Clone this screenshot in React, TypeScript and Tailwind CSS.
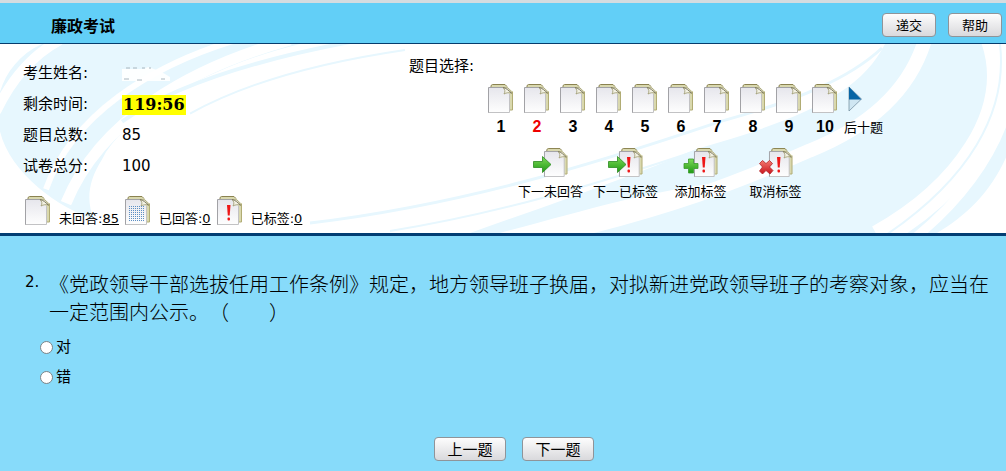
import type { ReactNode } from "react";

const QUESTIONS = [1, 2, 3, 4, 5, 6, 7, 8, 9, 10];
const CURRENT = 2;

const INFO = [
  { label: "考生姓名:", value: "" },
  { label: "剩余时间:", value: "119:56" },
  { label: "题目总数:", value: "85" },
  { label: "试卷总分:", value: "100" },
];

type ActionKind = "next" | "nextMarked" | "add" | "remove";

function Gradients() {
  return (
    <svg aria-hidden className="absolute h-0 w-0">
      <defs>
        <linearGradient id="sheet" x1="0" y1="0" x2="0" y2="1">
          <stop offset="0" stopColor="#e6e6ec" />
          <stop offset="1" stopColor="#fefefe" />
        </linearGradient>
        <linearGradient id="green" x1="0" y1="0" x2="0" y2="1">
          <stop offset="0" stopColor="#7ed957" />
          <stop offset="1" stopColor="#1f9a14" />
        </linearGradient>
        <linearGradient id="red" x1="0" y1="0" x2="0" y2="1">
          <stop offset="0" stopColor="#f47a70" />
          <stop offset="1" stopColor="#c8141c" />
        </linearGradient>
        <pattern id="dots" width="2" height="2" patternUnits="userSpaceOnUse">
          <rect width="1" height="1" fill="#5b8fc4" />
        </pattern>
      </defs>
    </svg>
  );
}

/* Two stacked sheets with a folded corner. */
function Sheets() {
  return (
    <g>
      <path d="M3 4V1.500L4.500.5H17l3 3 4.500 4V26H20V10z" fill="#d9d8ae" />
      <path d="M3 3V1.500L4.500.5H17l2 2" fill="none" stroke="#8a8250" />
      <path d="M24.500 7.500V26H22" fill="none" stroke="#b1ac74" />
      <path d="M.5 3.500H15l6.500 6.500v18.500H.5z" fill="url(#sheet)" />
      <path d="M.5 29V3.500H15" fill="none" stroke="#a2a2a6" />
      <path d="M.5 28.500h21V10" fill="none" stroke="#c2c2c4" />
      <path d="M15 3.500c2 2 2.500 4 1 6.500 2.500-1.500 5-1.500 8-1L20 4z" fill="#f3f2e4" stroke="#9b976c" strokeWidth="0.800" />
      <path d="M15 3.500c3 .5 6 3 8.500 6" fill="none" stroke="#77735a" strokeWidth="0.900" />
    </g>
  );
}

function Bang() {
  return (
    <g fill="#ee1616">
      <path d="M10 9h3.500l-.8 10.500h-1.900z" />
      <rect x="10.500" y="21.500" width="2.500" height="3" rx="1" />
    </g>
  );
}

function SheetIcon({ children }: { children?: ReactNode }) {
  return (
    <svg aria-hidden width="26" height="30" viewBox="0 0 26 30" className="shrink-0">
      <Sheets />
      {children}
    </svg>
  );
}

function ActionIcon({ kind }: { kind: ActionKind }) {
  return (
    <svg aria-hidden width="36" height="30" viewBox="0 0 36 30">
      <g transform="translate(11 0) scale(.94 1)">
        <Sheets />
      </g>
      {kind !== "next" && (
        <g transform="translate(9 0)">
          <Bang />
        </g>
      )}
      {(kind === "next" || kind === "nextMarked") && (
        <path d="M.5 13.500h9V8.500l8.500 8-8.500 8v-5h-9z" fill="url(#green)" stroke="#2b8a20" strokeWidth="0.800" />
      )}
      {kind === "add" && (
        <path d="M5.500 11h5v4.500H15v5h-4.500V25h-5v-4.500H1v-5h4.500z" fill="url(#green)" stroke="#3b9a2c" strokeWidth="0.800" />
      )}
      {kind === "remove" && (
        <path d="m4.500 12.500 3.500 3 3.500-3 3 3-3 3.500 3.500 3.500-3 3.500-4-3.500-3.500 3.500-3-3 3-4-3-3.500z" fill="url(#red)" stroke="#b3242a" strokeWidth="0.800" />
      )}
    </svg>
  );
}

function Swirls() {
  return (
    <svg aria-hidden viewBox="0 0 1006 190" preserveAspectRatio="none" className="absolute inset-0 h-full w-full">
      <g fill="#e7f7fe">
        <path d="M42 0H300C210 22 125 70 102 116 88 138 86 158 94 176 60 166 10 130 0 88V48C6 28 20 10 42 0Z" />
        <path d="M885 0H1006V114C990 150 965 173 937 190H540C620 176 680 160 720 139 640 150 590 166 500 190H470C560 158 640 130 695 106 800 76 860 50 885 0Z" />
      </g>
      <g fill="none" stroke="#fff">
        <path d="M60-4C34 10 12 34-4 68" strokeWidth="10" />
        <path d="M236-4C150 22 72 72 46 146" strokeWidth="6" />
        <path d="M290-4C190 24 100 76 66 160" strokeWidth="11" />
        <path d="M925-4C908 52 862 86 810 107 740 138 670 166 540 196" strokeWidth="14" />
        <path d="M993-4C1018 70 960 148 878 194" strokeWidth="24" />
        <path d="M1000 0C1010 24 1012 50 1004 76 990 116 960 158 916 194" strokeWidth="9" />
      </g>
      <g fill="none" stroke="#e7f7fe">
        <path d="M350-2C245 18 170 44 122 78" strokeWidth="4" />
        <path d="M405 6C310 20 240 42 190 70" strokeWidth="2" />
        <path d="M310 180C460 162 590 122 720 78 800 56 850 34 882 4" strokeWidth="3" />
        <path d="M390 188C500 170 600 140 700 106" strokeWidth="2" />
        <path d="M1000 0C1008 70 968 136 886 192" strokeWidth="2" />
      </g>
    </svg>
  );
}

/* The candidate's name is wiped out, only a few specks stay. */
function WipedName() {
  return (
    <svg aria-hidden width="50" height="18" viewBox="0 0 50 18">
      <path d="M0 4h22l4-2 12 4 10 6v4H0z" fill="#fff" opacity="0.900" />
      <path d="M4 3h4m3 0h4m5 0h3m4 0h2M2 14h5m8 1h5m19-1h4" stroke="#a9b6be" />
    </svg>
  );
}

function PushButton({ children, className }: { children: ReactNode; className: string }) {
  return (
    <button
      type="button"
      className={`h-6 rounded border border-[#8f9499] bg-linear-to-b from-[#fdfdfd] to-[#d9d9dc] text-center leading-6 ${className}`}
    >
      {children}
    </button>
  );
}

function Legend({ label, count, icon }: { label: string; count: number; icon?: ReactNode }) {
  return (
    <div className="flex items-end gap-2">
      <SheetIcon>{icon}</SheetIcon>
      <span className="text-[13px] leading-3.5">
        {label}:<a href="#" className="underline">{count}</a>
      </span>
    </div>
  );
}

function Action({ label, kind }: { label: string; kind: ActionKind }) {
  return (
    <button type="button" className="flex w-[75px] flex-col items-center gap-1 text-[13px] leading-5">
      <ActionIcon kind={kind} />
      {label}
    </button>
  );
}

export default function App() {
  return (
    <div className="min-h-screen bg-[#87dbfa] font-['DejaVu_Sans','Noto_Sans_CJK_SC',sans-serif] text-black">
      <Gradients />
      <header className="flex items-end justify-between border-t-3 border-b border-t-[#d5dce0] border-b-[#063c6c] bg-[#62cff7] pr-1 pl-[51px]">
        <h1 className="pt-3 pb-1 text-base leading-6 font-bold">廉政考试</h1>
        <div className="flex gap-3 pb-1.5 text-[13px]">
          <PushButton className="w-[54px]">递交</PushButton>
          <PushButton className="w-[54px]">帮助</PushButton>
        </div>
      </header>

      <section className="relative border-b-3 border-[#033e73] bg-white">
        <Swirls />
        <div className="relative flex">
          <div className="w-[409px] shrink-0 pt-3.5 pb-[7px] pl-[23px]">
            <dl className="text-[15px]">
              {INFO.map((row) => (
                <div key={row.label} className="flex h-[31px] items-center">
                  <dt className="w-[99px]">{row.label}</dt>
                  {row.value === "119:56" ? (
                    <dd className="bg-[#ffff00] px-px font-['DejaVu_Serif',serif] text-base leading-5 font-bold">
                      {row.value}
                    </dd>
                  ) : (
                    <dd>{row.value || <WipedName />}</dd>
                  )}
                </div>
              ))}
            </dl>
            <div className="mt-3.5 flex gap-1.5 pl-0.5">
              <Legend label="未回答" count={85} />
              <Legend label="已回答" count={0} icon={<rect x="4" y="9" width="15" height="16" fill="url(#dots)" />} />
              <Legend label="已标签" count={0} icon={<Bang />} />
            </div>
          </div>

          <div className="pt-2.5">
            <h2 className="text-[15px] leading-6">题目选择:</h2>
            <div className="mt-1.5 flex pl-[79px]">
              {QUESTIONS.map((n) => (
                <button
                  key={n}
                  type="button"
                  className={`flex w-9 flex-col items-start font-['Liberation_Sans',sans-serif] text-base leading-[26px] font-bold ${n === CURRENT ? "text-[#ee0000]" : ""}`}
                >
                  <SheetIcon />
                  <span className="w-[26px] text-center">{n}</span>
                </button>
              ))}
              <button type="button" className="-ml-1 flex flex-col items-start text-[13px] leading-7">
                <svg aria-hidden width="20" height="30" viewBox="0 0 20 30" className="ml-1">
                  <path d="M1 3v24l12.500-12z" fill="#cfe6f2" stroke="#6b8799" strokeWidth="0.700" />
                  <path d="M1 3v12.500h12.500z" fill="#0865a5" />
                </svg>
                后十题
              </button>
            </div>
            <div className="mt-1.5 flex pl-[104px]">
              <Action label="下一未回答" kind="next" />
              <Action label="下一已标签" kind="nextMarked" />
              <Action label="添加标签" kind="add" />
              <Action label="取消标签" kind="remove" />
            </div>
          </div>
        </div>
      </section>

      <main className="pt-[34px]">
        <fieldset>
          <legend className="flex pr-3 pl-[25px]">
            <span className="w-6 shrink-0 text-[15px] leading-6">2.</span>
            <span className="font-['Noto_Sans_CJK_SC',sans-serif] text-xl leading-7 font-light [text-spacing-trim:space-all]">
              《党政领导干部选拔任用工作条例》规定，地方领导班子换届，对拟新进党政领导班子的考察对象，应当在一定范围内公示。（　　）
            </span>
          </legend>
          <div className="mt-1.5 pl-10 text-[15px]">
            {["对", "错"].map((option) => (
              <label key={option} className="flex h-[30px] w-fit items-center gap-[3px]">
                <input
                  type="radio"
                  name="answer"
                  className="size-[13px] appearance-none rounded-full border border-[#7b8387] bg-white checked:border-4"
                />
                {option}
              </label>
            ))}
          </div>
        </fieldset>
        <div className="mt-[45px] flex justify-center gap-4 pb-2 pl-[22px] text-[15px]">
          <PushButton className="w-[72px]">上一题</PushButton>
          <PushButton className="w-[72px]">下一题</PushButton>
        </div>
      </main>
    </div>
  );
}
